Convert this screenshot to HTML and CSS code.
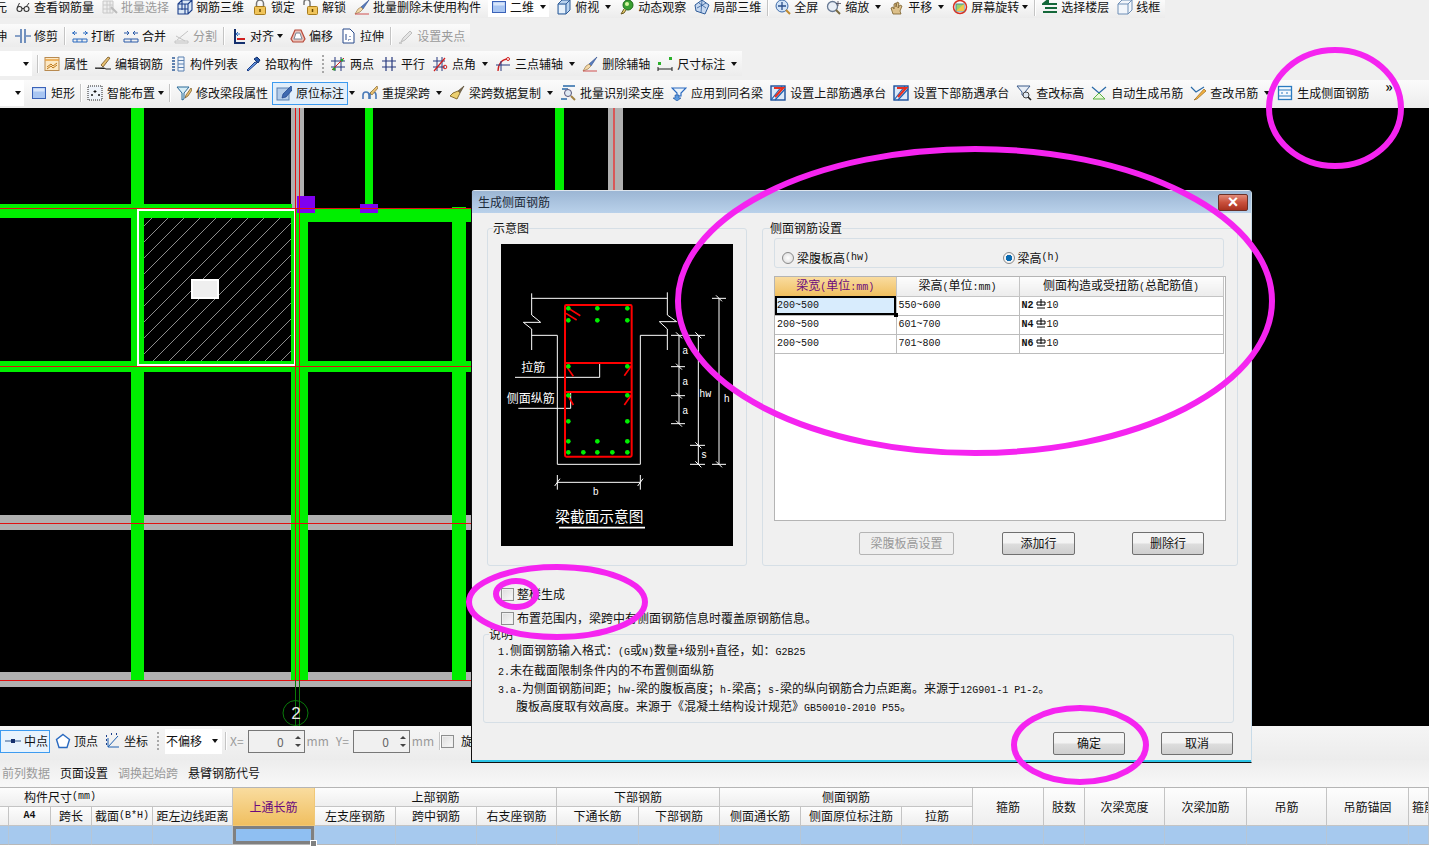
FILE: index.html
```html
<!DOCTYPE html>
<html lang="zh-CN">
<head>
    <meta charset="UTF-8">
    <title>生成侧面钢筋</title>
    <link rel="stylesheet" href="styles.css">
</head>
<body>
    <!-- 工具栏图标 -->
    <svg class="defs" aria-hidden="true">
        <symbol id="i-glasses" viewBox="0 0 16 16"><circle cx="4.500" cy="10" r="2.500" fill="none" stroke="#333" stroke-width="1.100"/><circle cx="11.500" cy="10" r="2.500" fill="none" stroke="#333" stroke-width="1.100"/><path d="M7 9.500h2M2.500 8l2-4M11 8l3-4" stroke="#333" fill="none"/></symbol>
        <symbol id="i-gridgrey" viewBox="0 0 16 16"><path d="M1 2h10v12H1zM1 6h10M1 10h10M5 2v12M8 2v12" fill="#eee" stroke="#c8c8c8"/><path d="M9 8l6 6" stroke="#bbb" stroke-width="2"/></symbol>
        <symbol id="i-box3d" viewBox="0 0 16 16"><path d="M1 5l4-4h10v10l-4 4H1zM1 5h10v10M11 5l4-4M5 1v10M8 5v10M1 10h10" fill="#dbe8f6" stroke="#1c3f8a" stroke-width="1.100"/></symbol>
        <symbol id="i-lock" viewBox="0 0 16 16"><path d="M4.500 8V4.500a3.500 3.500 0 0 1 7 0V8" fill="none" stroke="#777" stroke-width="1.500"/><rect x="2.500" y="7.500" width="11" height="8" rx="1" fill="#f0c45a" stroke="#a87c1c"/><path d="M8 10v3" stroke="#6b4a00" stroke-width="1.500"/></symbol>
        <symbol id="i-unlock" viewBox="0 0 16 16"><path d="M1 6V3.500a3 3 0 0 1 6 0V8" fill="none" stroke="#777" stroke-width="1.500"/><rect x="4.500" y="7.500" width="10" height="8" rx="1" fill="#f0c45a" stroke="#a87c1c"/><path d="M9.500 10v3" stroke="#6b4a00" stroke-width="1.500"/></symbol>
        <symbol id="i-brush" viewBox="0 0 16 16"><path d="M15 1L7 8l2 2z" fill="#5a7fc0" stroke="#2b4a8a" stroke-width=".6"/><path d="M7 8l2 2-3 3-5 2 3-5z" fill="#f3d9a8" stroke="#8b6a3a" stroke-width=".6"/><path d="M1 15h14" stroke="#d05050"/></symbol>
        <symbol id="i-square" viewBox="0 0 16 16"><rect x="1.500" y="2.500" width="13" height="11" fill="#a9c6f2" stroke="#3a62b8"/><rect x="2.500" y="3.500" width="11" height="3" fill="#d9e6fa"/></symbol>
        <symbol id="i-topview" viewBox="0 0 16 16"><path d="M2 5l4-4h8v10l-4 4H2z" fill="#b8d2ee" stroke="#2f5c98"/><path d="M2 5h8v10M10 5l4-4" fill="none" stroke="#2f5c98"/><rect x="3" y="6" width="6" height="8" fill="#e6f0fa"/></symbol>
        <symbol id="i-orbit" viewBox="0 0 16 16"><circle cx="9" cy="6" r="5" fill="#3aa032" stroke="#1e6a1a"/><circle cx="8" cy="5" r="2" fill="#d6f5a0"/><path d="M5 10l-3 5 3-1 2-3" fill="#e8d070" stroke="#6a5a20"/></symbol>
        <symbol id="i-partial" viewBox="0 0 16 16"><path d="M8 1l7 5-4 9-9-3-1-6z" fill="#c6d8f0" stroke="#2f5c98"/><path d="M5 4l7 5M3 9l9-5M8 1l-1 13" stroke="#2f5c98" stroke-width=".8"/></symbol>
        <symbol id="i-fit" viewBox="0 0 16 16"><circle cx="7" cy="7" r="6" fill="#d2e4f8" stroke="#3d6aa8"/><path d="M7 3v8M3 7h8" stroke="#2b4f8a" stroke-width="1.300"/><path d="M11 11l4 4" stroke="#c08a30" stroke-width="2"/></symbol>
        <symbol id="i-zoom" viewBox="0 0 16 16"><circle cx="6.500" cy="7.500" r="5" fill="#e8eef6" stroke="#687a94" stroke-width="1.300"/><path d="M10 11l4 4" stroke="#7a6a40" stroke-width="2"/><path d="M12 2v5M10 4.500h5" stroke="#445" stroke-width=".8"/></symbol>
        <symbol id="i-hand" viewBox="0 0 16 16"><path d="M4 15l-2-6 2-1 1 2V5l2-1v4l1-5 2 1-1 5 2-3 2 1-2 5 1 3z" fill="#dcc08a" stroke="#7a5e2a" stroke-width=".8"/></symbol>
        <symbol id="i-rotate" viewBox="0 0 16 16"><circle cx="8" cy="8" r="6.500" fill="none" stroke="#d83020" stroke-width="1.500"/><rect x="4" y="5" width="8" height="7" fill="#9ed268" stroke="#4a8a9a"/><path d="M4 12l8-7v7z" fill="#f2c84a"/></symbol>
        <symbol id="i-floors" viewBox="0 0 16 16"><path d="M1 5l5-4v4zM1 5h14M3 9h12M1 13h14" stroke="#14683a" stroke-width="2" fill="#1f7fb0"/></symbol>
        <symbol id="i-wire" viewBox="0 0 16 16"><path d="M1 5l4-4h10v10l-4 4H1zM1 5h10v10M11 5l4-4" fill="#f2f6fb" stroke="#6f8fb6"/></symbol>
        <symbol id="i-trim" viewBox="0 0 16 16"><path d="M6 1v14M10 1v14M0 8h5M11 8h5" stroke="#1c4f9a" stroke-width="1.200" fill="none"/></symbol>
        <symbol id="i-break" viewBox="0 0 16 16"><path d="M0 5h5M11 5h5M3 3l-2 2 2 2M13 3l2 2-2 2M1 11h14v3H1z" stroke="#2a6ac0" fill="none"/><path d="M5 11v3M10 11v3" stroke="#2a6ac0"/></symbol>
        <symbol id="i-merge" viewBox="0 0 16 16"><path d="M1 5h5M10 5h5M4 3l2 2-2 2M12 3l-2 2 2 2M1 11h14v3H1z" stroke="#2a5aa8" fill="none"/><path d="M8 11v3" stroke="#2a5aa8"/></symbol>
        <symbol id="i-split" viewBox="0 0 16 16"><path d="M1 13h13v2H1zM3 12L14 3M2 8l9 5" stroke="#c4c4c4" fill="#eee"/></symbol>
        <symbol id="i-align" viewBox="0 0 16 16"><path d="M4 1v14h10" stroke="#14306e" stroke-width="2" fill="none"/><path d="M6 11h8" stroke="#d02020" stroke-width="2"/><path d="M9 6H5l2-2M5 6l2 2" stroke="#2a6ac0" fill="none"/></symbol>
        <symbol id="i-offset" viewBox="0 0 16 16"><path d="M5 2h6l4 9-2 3H3l-2-3z" fill="#e8c0b8" stroke="#b84838" stroke-width="1.200"/><path d="M6 5h4l2 6H4z" fill="#fff" stroke="#7a8a9a"/></symbol>
        <symbol id="i-stretch" viewBox="0 0 16 16"><path d="M2 1h7l4 4v10H2z" fill="#fff" stroke="#27498a"/><path d="M5 6v6M9 8v1M9 11v1M7 12h1" stroke="#27498a"/></symbol>
        <symbol id="i-grip" viewBox="0 0 16 16"><path d="M3 14l2-4 7-7 2 2-7 7z" fill="#e4e4e4" stroke="#bdbdbd"/><path d="M1 15h3" stroke="#ccc" stroke-width="2"/></symbol>
        <symbol id="i-props" viewBox="0 0 16 16"><rect x="1" y="1.500" width="14" height="13" fill="#fce8c4" stroke="#b88a50"/><path d="M1 4h14" stroke="#e8a040" stroke-width="1.500"/><path d="M3 11l4-3 2 2 4-3M3 13l4-3 2 2 4-3" stroke="#c07818" fill="none"/></symbol>
        <symbol id="i-edit" viewBox="0 0 16 16"><path d="M15 2l-2-1-7 8 2 2z" fill="#e8c070" stroke="#705020" stroke-width=".8"/><path d="M0 12h9l2 1h5" stroke="#222"/><path d="M1 12v1" stroke="#222"/></symbol>
        <symbol id="i-list" viewBox="0 0 16 16"><path d="M8 1h6v14H8zM8 4.500h6M8 8h6M8 11.500h6" stroke="#5a80b0" fill="#eef4fb"/><path d="M2 2h3M2 5h3M2 8h3M2 11h3M2 14h3" stroke="#2f5c98" stroke-width="1.500"/></symbol>
        <symbol id="i-pick" viewBox="0 0 16 16"><path d="M10 6L2 14l1 1 9-8z" fill="#6a9ae0" stroke="#1c3f8a"/><path d="M9 3l4 4 2-3-3-3z" fill="#2a5aa8" stroke="#14306e"/></symbol>
        <symbol id="i-twopt" viewBox="0 0 16 16"><path d="M5 1v14M11 1v14M1 5h14M1 11h14" stroke="#27397e"/><path d="M2 14L14 2" stroke="#d02020"/><circle cx="4" cy="13" r="1.500" fill="#2aa02a"/><circle cx="12" cy="4" r="1.500" fill="#2aa02a"/></symbol>
        <symbol id="i-parallel" viewBox="0 0 16 16"><path d="M5 1v14M11 1v14M1 5h14M1 11h14" stroke="#27397e" stroke-width="1.200"/></symbol>
        <symbol id="i-angle" viewBox="0 0 16 16"><path d="M5 1v14M10 1v14M1 5h12M1 11h12" stroke="#27397e"/><path d="M2 15L13 2" stroke="#d02020" stroke-width="1.200"/><circle cx="13" cy="11" r="1.800" fill="none" stroke="#d02020"/></symbol>
        <symbol id="i-arc" viewBox="0 0 16 16"><path d="M3 15C3 8 7 3 13 3" stroke="#d02020" stroke-width="1.300" fill="none"/><path d="M1 9h14M6 5v10" stroke="#27397e"/><circle cx="13" cy="3" r="1.500" fill="#fff" stroke="#d02020"/></symbol>
        <symbol id="i-dim" viewBox="0 0 16 16"><path d="M1 13h14M1 11v4M15 11v4" stroke="#222"/><rect x="1" y="6" width="3" height="3" fill="#2ab02a"/><rect x="12" y="1" width="3" height="3" fill="#2ab02a"/></symbol>
        <symbol id="i-smart" viewBox="0 0 16 16"><rect x="1" y="1" width="14" height="14" fill="#eef3fa" stroke="#222" stroke-dasharray="1 1"/><path d="M8 5v3M6.500 6.500h3M4 10h2M5 9v2M11 10h2M12 9v2" stroke="#111"/></symbol>
        <symbol id="i-funnel" viewBox="0 0 16 16"><path d="M1 2h12L8 8v6l-2 1V8z" fill="#d8eef6" stroke="#2a6a98"/><path d="M15 3l-5 7-1 3 3-2 4-6z" fill="#e8c070" stroke="#705020" stroke-width=".7"/></symbol>
        <symbol id="i-mark" viewBox="0 0 16 16"><rect x="1" y="3" width="12" height="12" fill="#b4cdea" stroke="#5a80b0"/><path d="M15 1l-8 8-1 4 4-1 7-8z" fill="#3f6ab0" stroke="#1c3f8a" stroke-width=".7"/></symbol>
        <symbol id="i-span" viewBox="0 0 16 16"><path d="M1 14v-4a2.500 2.500 0 0 1 6 0v4M8 14v-4a2.500 2.500 0 0 1 6 0v4" fill="none" stroke="#4a7ab8" stroke-width="1.600"/><path d="M15 1l-7 7 2 2 6-7z" fill="#e8c070" stroke="#8a6a30" stroke-width=".7"/></symbol>
        <symbol id="i-sweep" viewBox="0 0 16 16"><path d="M15 1L9 6l2 2z" fill="#7a6a50" stroke="#4a3a20" stroke-width=".6"/><path d="M9 6l2 2-3 6-7-3 3-3z" fill="#ecd070" stroke="#8a7030"/></symbol>
        <symbol id="i-scan" viewBox="0 0 16 16"><path d="M3 1h12M2 4h6M1 14h6" stroke="#2a6aa8" stroke-width="1.500"/><circle cx="8" cy="8" r="3.500" fill="#dfe8f2" stroke="#557"/><path d="M11 11l4 4" stroke="#a08040" stroke-width="2"/></symbol>
        <symbol id="i-apply" viewBox="0 0 16 16"><path d="M1 3h14l-5 5v3H6V8z" fill="#eaf3fb" stroke="#2a6ac0" stroke-width="1.200"/><path d="M4 10h4v3h2l-4 3-4-3h2z" fill="#5a9ae0" stroke="#1c4f9a" stroke-width=".6"/></symbol>
        <symbol id="i-zed" viewBox="0 0 16 16"><rect x="1" y="1" width="14" height="14" fill="#dbe8f8" stroke="#1c4f9a" stroke-width="1.400"/><path d="M1 15L12 1M5 15L15 4" stroke="#1c5fb0" stroke-width="1.200"/><path d="M4 3h9L5 12" fill="none" stroke="#e83020" stroke-width="2.200"/></symbol>
        <symbol id="i-level" viewBox="0 0 16 16"><path d="M1 1h13L9 7v4l-3-1V7z" fill="#e8eef6" stroke="#3a5a8a"/><circle cx="10" cy="10" r="3" fill="#dfe8f2" stroke="#444"/><path d="M12 12l3 3" stroke="#222" stroke-width="1.600"/></symbol>
        <symbol id="i-hang" viewBox="0 0 16 16"><path d="M1 2l7 6 7-6" stroke="#2a6aa8" stroke-width="1.300" fill="none"/><path d="M8 8l6 6H2z" fill="#e8f8d8" stroke="#5ab040"/></symbol>
        <symbol id="i-hangedit" viewBox="0 0 16 16"><path d="M1 2l5 5 8-5" stroke="#2a6aa8" fill="none" stroke-width="1.200"/><path d="M14 4L6 13l-2 2 3-1 9-8z" fill="#f2b040" stroke="#9a6a20" stroke-width=".7"/></symbol>
        <symbol id="i-side" viewBox="0 0 16 16"><rect x="1.500" y="1.500" width="13" height="13" fill="#f4f9fe" stroke="#2a7ac0" stroke-width="1.300"/><path d="M2 5h12M2 11h12" stroke="#2a7ac0"/><path d="M4 8h2M9 8h2" stroke="#2a7ac0"/></symbol>
        <symbol id="i-mid" viewBox="0 0 16 16"><path d="M0 8h16" stroke="#5a7aa8" stroke-width="1.300"/><rect x="6" y="6" width="4" height="4" fill="#14306e"/></symbol>
        <symbol id="i-vertex" viewBox="0 0 16 16"><path d="M8 1.500l6.500 5-2.500 8H4l-2.500-8z" fill="#fff" stroke="#2a6ac0" stroke-width="1.400"/></symbol>
        <symbol id="i-coord" viewBox="0 0 16 16"><path d="M3 5v9h11M3 14L13 3" stroke="#1c5fb0" fill="none"/><path d="M1 3h1M1 7h1M1 11h1M6 1h1M11 1h1" stroke="#1c3f8a" stroke-width="2"/></symbol>
        <symbol id="i-steel" viewBox="0 0 10 10"><path d="M1 3h8v3H1zM5 0v7M1 9h8" fill="none" stroke="#000"/></symbol>
    </svg>

    <!-- 顶部工具栏 -->
    <div class="toolbars">
        <div class="tb-row row-a">
            <span class="cut">元</span>
            <span class="tb"><svg class="ic"><use href="#i-glasses"/></svg>查看钢筋量</span>
            <span class="tb off"><svg class="ic"><use href="#i-gridgrey"/></svg>批量选择</span>
            <span class="tb"><svg class="ic"><use href="#i-box3d"/></svg>钢筋三维</span>
            <span class="tb"><svg class="ic"><use href="#i-lock"/></svg>锁定</span>
            <span class="tb"><svg class="ic"><use href="#i-unlock"/></svg>解锁</span>
            <span class="tb"><svg class="ic"><use href="#i-brush"/></svg>批量删除未使用构件</span>
            <span class="tb tb-white"><svg class="ic"><use href="#i-square"/></svg>二维<i class="arrow"></i></span>
            <span class="tb"><svg class="ic"><use href="#i-topview"/></svg>俯视<i class="arrow"></i></span>
            <span class="tb"><svg class="ic"><use href="#i-orbit"/></svg>动态观察</span>
            <span class="tb"><svg class="ic"><use href="#i-partial"/></svg>局部三维</span>
            <i class="sep"></i>
            <span class="tb"><svg class="ic"><use href="#i-fit"/></svg>全屏</span>
            <span class="tb"><svg class="ic"><use href="#i-zoom"/></svg>缩放<i class="arrow"></i></span>
            <span class="tb"><svg class="ic"><use href="#i-hand"/></svg>平移<i class="arrow"></i></span>
            <span class="tb"><svg class="ic"><use href="#i-rotate"/></svg>屏幕旋转<i class="arrow tight"></i></span>
            <i class="sep"></i>
            <span class="tb"><svg class="ic"><use href="#i-floors"/></svg>选择楼层</span>
            <span class="tb"><svg class="ic"><use href="#i-wire"/></svg>线框</span>
        </div>
        <div class="tb-row row-b">
            <span class="cut">伸</span>
            <span class="tb"><svg class="ic"><use href="#i-trim"/></svg>修剪</span>
            <i class="sep"></i>
            <span class="tb"><svg class="ic"><use href="#i-break"/></svg>打断</span>
            <span class="tb"><svg class="ic"><use href="#i-merge"/></svg>合并</span>
            <span class="tb off"><svg class="ic"><use href="#i-split"/></svg>分割</span>
            <i class="sep"></i>
            <span class="tb"><svg class="ic"><use href="#i-align"/></svg>对齐<i class="arrow tight"></i></span>
            <span class="tb"><svg class="ic"><use href="#i-offset"/></svg>偏移</span>
            <span class="tb"><svg class="ic"><use href="#i-stretch"/></svg>拉伸</span>
            <i class="sep"></i>
            <span class="tb off"><svg class="ic"><use href="#i-grip"/></svg>设置夹点</span>
        </div>
        <div class="tb-row row-c">
            <span class="combo"><i class="arrow"></i></span>
            <i class="sep"></i>
            <span class="tb"><svg class="ic"><use href="#i-props"/></svg>属性</span>
            <span class="tb"><svg class="ic"><use href="#i-edit"/></svg>编辑钢筋</span>
            <span class="tb"><svg class="ic"><use href="#i-list"/></svg>构件列表</span>
            <span class="tb"><svg class="ic"><use href="#i-pick"/></svg>拾取构件</span>
            <i class="grip"></i>
            <span class="tb"><svg class="ic"><use href="#i-twopt"/></svg>两点</span>
            <span class="tb"><svg class="ic"><use href="#i-parallel"/></svg>平行</span>
            <span class="tb"><svg class="ic"><use href="#i-angle"/></svg>点角<i class="arrow"></i></span>
            <span class="tb"><svg class="ic"><use href="#i-arc"/></svg>三点辅轴<i class="arrow"></i></span>
            <span class="tb"><svg class="ic"><use href="#i-brush"/></svg>删除辅轴</span>
            <span class="tb"><svg class="ic"><use href="#i-dim"/></svg>尺寸标注<i class="arrow"></i></span>
        </div>
        <div class="tb-row row-d">
            <span class="combo short"><i class="arrow"></i></span>
            <span class="tb"><svg class="ic"><use href="#i-square"/></svg>矩形</span>
            <i class="sep"></i>
            <span class="tb"><svg class="ic"><use href="#i-smart"/></svg>智能布置<i class="arrow tight"></i></span>
            <i class="sep"></i>
            <span class="tb"><svg class="ic"><use href="#i-funnel"/></svg>修改梁段属性</span>
            <span class="tb tb-on"><svg class="ic"><use href="#i-mark"/></svg>原位标注</span>
            <i class="arrow after-on"></i>
            <span class="tb"><svg class="ic"><use href="#i-span"/></svg>重提梁跨<i class="arrow"></i></span>
            <span class="tb"><svg class="ic"><use href="#i-sweep"/></svg>梁跨数据复制<i class="arrow"></i></span>
            <span class="tb"><svg class="ic"><use href="#i-scan"/></svg>批量识别梁支座</span>
            <span class="tb"><svg class="ic"><use href="#i-apply"/></svg>应用到同名梁</span>
            <span class="tb"><svg class="ic"><use href="#i-zed"/></svg>设置上部筋遇承台</span>
            <span class="tb"><svg class="ic"><use href="#i-zed"/></svg>设置下部筋遇承台</span>
            <span class="tb"><svg class="ic"><use href="#i-level"/></svg>查改标高</span>
            <span class="tb"><svg class="ic"><use href="#i-hang"/></svg>自动生成吊筋</span>
            <span class="tb"><svg class="ic"><use href="#i-hangedit"/></svg>查改吊筋<i class="arrow"></i></span>
            <span class="tb"><svg class="ic"><use href="#i-side"/></svg>生成侧面钢筋</span>
            <span class="more">»</span>
        </div>
    </div>

    <!-- 绘图区 -->
    <svg class="canvas" viewBox="0 108 1429 618">
        <defs>
            <pattern id="hatch" width="16" height="16" patternUnits="userSpaceOnUse" patternTransform="translate(144 218)">
                <path d="M-1 9L9 -1M-1 25L25 -1" stroke="#b0b0b0" stroke-width=".8"/>
            </pattern>
        </defs>
        <rect x="0" y="108" width="1429" height="618" fill="#000"/>
        <rect x="291" y="108" width="13" height="100" fill="#b0b0b0"/>
        <rect x="608" y="108" width="15" height="90" fill="#b0b0b0"/>
        <rect x="613.500" y="108" width="1" height="90" fill="#f00"/>
        <rect x="0" y="515" width="471" height="15" fill="#b0b0b0"/>
        <rect x="0" y="672" width="471" height="15" fill="#b0b0b0"/>
        <g fill="#00ef00">
            <rect x="131" y="108" width="13" height="572"/>
            <rect x="365" y="108" width="8" height="100"/>
            <rect x="555" y="108" width="9" height="90"/>
            <rect x="291" y="208" width="17" height="472"/>
            <rect x="452" y="207" width="14" height="473"/>
            <rect x="0" y="204" width="292" height="14"/>
            <rect x="304" y="208" width="167" height="14"/>
            <rect x="0" y="361" width="471" height="11"/>
        </g>
        <rect x="144" y="218" width="147" height="143" fill="#000"/>
        <rect x="144" y="218" width="147" height="143" fill="url(#hatch)"/>
        <rect x="138" y="210" width="157" height="155" fill="none" stroke="#fff" stroke-width="2"/>
        <rect x="192" y="280" width="26" height="18" fill="#efefef" stroke="#fff" stroke-width="2"/>
        <rect x="297" y="196" width="18" height="17" fill="#7f00f0"/>
        <rect x="360" y="204" width="18" height="9" fill="#7f00f0"/>
        <g fill="#e01010">
            <rect x="0" y="208" width="471" height="1"/>
            <rect x="0" y="366" width="471" height="1"/>
            <rect x="0" y="523" width="471" height="1"/>
            <rect x="0" y="680" width="471" height="1"/>
            <rect x="295" y="108" width="1" height="572"/>
            <rect x="299" y="108" width="1" height="572"/>
        </g>
        <path d="M295.500 680V726M299.500 680V726" stroke="#0a7a0a"/>
        <circle cx="295.500" cy="713" r="12.500" fill="none" stroke="#0a7a0a"/>
        <text x="296" y="719" class="axis-no">2</text>
    </svg>

    <!-- 捕捉工具条 -->
    <div class="snapbar">
        <span class="tb tb-on snap-mid"><svg class="ic"><use href="#i-mid"/></svg>中点</span>
        <span class="tb"><svg class="ic"><use href="#i-vertex"/></svg>顶点</span>
        <span class="tb"><svg class="ic"><use href="#i-coord"/></svg>坐标</span>
        <i class="grip"></i>
        <span class="combo wide">不偏移<i class="arrow"></i></span>
        <i class="sep"></i>
        <span class="off">X=</span>
        <span class="spin">0<i class="spin-btn"></i></span>
        <span class="off">mm</span>
        <span class="off">Y=</span>
        <span class="spin">0<i class="spin-btn"></i></span>
        <span class="off">mm</span>
        <i class="sep"></i>
        <i class="check"></i>
        <span>旋</span>
    </div>
    <div class="actionbar">
        <span class="off first-cut">前列数据</span>
        <span>页面设置</span>
        <span class="off">调换起始跨</span>
        <span>悬臂钢筋代号</span>
    </div>

    <!-- 原位标注表格 -->
    <div class="beam-grid">
        <div class="th span-5 left-pad">构件尺寸<span class="lat">(mm)</span></div>
        <div class="th hot row-2">上通长筋</div>
        <div class="th span-3">上部钢筋</div>
        <div class="th span-2">下部钢筋</div>
        <div class="th span-3">侧面钢筋</div>
        <div class="th row-2">箍筋</div>
        <div class="th row-2">肢数</div>
        <div class="th row-2">次梁宽度</div>
        <div class="th row-2">次梁加筋</div>
        <div class="th row-2">吊筋</div>
        <div class="th row-2">吊筋锚固</div>
        <div class="th row-2 clip">箍筋</div>

        <div class="th"></div>
        <div class="th lat strong">A4</div>
        <div class="th">跨长</div>
        <div class="th">截面<span class="lat">(B*H)</span></div>
        <div class="th">距左边线距离</div>
        <div class="th">左支座钢筋</div>
        <div class="th">跨中钢筋</div>
        <div class="th">右支座钢筋</div>
        <div class="th">下通长筋</div>
        <div class="th">下部钢筋</div>
        <div class="th">侧面通长筋</div>
        <div class="th">侧面原位标注筋</div>
        <div class="th">拉筋</div>

        <div class="td"></div><div class="td"></div><div class="td"></div><div class="td"></div><div class="td"></div>
        <div class="td current"></div>
        <div class="td"></div><div class="td"></div><div class="td"></div><div class="td"></div><div class="td"></div>
        <div class="td"></div><div class="td"></div><div class="td"></div>
        <div class="td"></div><div class="td"></div><div class="td"></div><div class="td"></div><div class="td"></div>
        <div class="td"></div><div class="td"></div>
    </div>
    <div class="grid-rest"></div>

    <!-- 生成侧面钢筋 对话框 -->
    <div class="dialog">
        <div class="dlg-title">
            <span>生成侧面钢筋</span>
            <span class="dlg-close">×</span>
        </div>
        <div class="dlg-body">
            <div class="dlg-top">
                <fieldset class="group group-pic">
                    <legend>示意图</legend>
                    <svg class="section" viewBox="93 177 696 906">
                        <rect x="93" y="177" width="696" height="906" fill="#000"/>
                        <g fill="none" stroke="#fff" stroke-width="3">
                            <path d="M185 340H592M185 325V390L212 412H160L185 432V495M592 322V390L620 410H568L592 432V495"/>
                            <path d="M185 451H262V838H511V451H592"/>
                            <path d="M603 451H705M627 451V716M603 545H645M603 632H645M603 716H645"/>
                            <path d="M685 451V838M660 781H705M660 838H705M747 340V838M726 340H768M726 838H768"/>
                            <path d="M135 577H389V534M145 670H302V622"/>
                            <path d="M262 892H511M262 870V914M511 870V914M254 903L270 881M503 903L519 881"/>
                            <path d="M618 442L636 460M618 536L636 554M618 623L636 641M618 707L636 725M676 442L694 460M676 772L694 790M676 829L694 847M738 331L756 349M738 829L756 847"/>
                        </g>
                        <g fill="none" stroke="#f00" stroke-width="6">
                            <rect x="285" y="360" width="200" height="455" rx="4"/>
                            <path d="M285 534H485M285 621H485"/>
                        </g>
                        <g fill="none" stroke="#f00" stroke-width="5">
                            <path d="M295 370L331 392M288 385L320 405M288 542L310 574M484 542L463 572M293 630L310 660M484 630L463 660"/>
                        </g>
                        <g class="bars">
                            <circle cx="295" cy="370" r="7"/><circle cx="382" cy="370" r="7"/><circle cx="472" cy="370" r="7"/>
                            <circle cx="295" cy="406" r="7"/><circle cx="382" cy="406" r="7"/><circle cx="472" cy="406" r="7"/>
                            <circle cx="295" cy="544" r="7"/><circle cx="472" cy="544" r="7"/>
                            <circle cx="295" cy="631" r="7"/><circle cx="472" cy="631" r="7"/>
                            <circle cx="295" cy="709" r="7"/><circle cx="472" cy="709" r="7"/>
                            <circle cx="295" cy="769" r="7"/><circle cx="382" cy="769" r="7"/><circle cx="472" cy="769" r="7"/>
                            <circle cx="295" cy="802" r="7"/><circle cx="340" cy="802" r="7"/><circle cx="382" cy="802" r="7"/><circle cx="427" cy="802" r="7"/><circle cx="472" cy="802" r="7"/>
                        </g>
                        <g class="pic-label">
                            <text x="190" y="560">拉筋</text>
                            <text x="182" y="653">侧面纵筋</text>
                            <text x="646" y="507" class="pic-lat">a</text>
                            <text x="646" y="600" class="pic-lat">a</text>
                            <text x="646" y="688" class="pic-lat">a</text>
                            <text x="706" y="635" class="pic-lat">hw</text>
                            <text x="702" y="820" class="pic-lat">s</text>
                            <text x="770" y="650" class="pic-lat">h</text>
                            <text x="377" y="931" class="pic-lat">b</text>
                            <text x="388" y="1010" class="pic-title">梁截面示意图</text>
                        </g>
                        <path d="M267 1028H525" stroke="#fff" stroke-width="5"/>
                    </svg>
                </fieldset>
                <fieldset class="group group-set">
                    <legend>侧面钢筋设置</legend>
                    <div class="radio-box">
                        <label class="radio-item"><i class="radio"></i>梁腹板高<span class="lat">(hw)</span></label>
                        <label class="radio-item"><i class="radio on"></i>梁高<span class="lat">(h)</span></label>
                    </div>
                    <div class="rule-box">
                        <table class="rule-table">
                            <colgroup><col class="c1"><col class="c2"><col class="c3"></colgroup>
                            <tr>
                                <th class="hot">梁宽<span class="lat">(</span>单位<span class="lat">:mm)</span></th>
                                <th>梁高<span class="lat">(</span>单位<span class="lat">:mm)</span></th>
                                <th>侧面构造或受扭筋<span class="lat">(</span>总配筋值<span class="lat">)</span></th>
                            </tr>
                            <tr>
                                <td class="lat active-cell">200~500</td>
                                <td class="lat">550~600</td>
                                <td class="lat"><b>N2</b><svg class="steel"><use href="#i-steel"/></svg>10</td>
                            </tr>
                            <tr>
                                <td class="lat">200~500</td>
                                <td class="lat">601~700</td>
                                <td class="lat"><b>N4</b><svg class="steel"><use href="#i-steel"/></svg>10</td>
                            </tr>
                            <tr>
                                <td class="lat">200~500</td>
                                <td class="lat">701~800</td>
                                <td class="lat"><b>N6</b><svg class="steel"><use href="#i-steel"/></svg>10</td>
                            </tr>
                        </table>
                    </div>
                    <div class="set-actions">
                        <button class="btn b-web" disabled>梁腹板高设置</button>
                        <button class="btn b-add">添加行</button>
                        <button class="btn b-del">删除行</button>
                    </div>
                </fieldset>
            </div>
            <label class="check-row"><i class="check"></i>整楼生成</label>
            <label class="check-row"><i class="check"></i>布置范围内，梁跨中有侧面钢筋信息时覆盖原钢筋信息。</label>
            <fieldset class="group group-note">
                <legend>说明</legend>
                <p class="note"><span class="lat">1.</span>侧面钢筋输入格式：<span class="lat">(G</span>或<span class="lat">N)</span>数量+级别+直径，如：<span class="lat">G2B25</span></p>
                <p class="note"><span class="lat">2.</span>未在截面限制条件内的不布置侧面纵筋</p>
                <p class="note"><span class="lat">3.a-</span>为侧面钢筋间距；<span class="lat">hw-</span>梁的腹板高度；<span class="lat">h-</span>梁高；<span class="lat">s-</span>梁的纵向钢筋合力点距离。来源于<span class="lat">12G901-1 P1-2</span>。</p>
                <p class="note indent">腹板高度取有效高度。来源于《混凝土结构设计规范》<span class="lat">GB50010-2010 P55</span>。</p>
            </fieldset>
            <div class="dlg-actions">
                <button class="btn">确定</button>
                <button class="btn">取消</button>
            </div>
        </div>
    </div>

    <!-- 截图上的洋红色圈注 -->
    <svg class="marks" viewBox="0 0 1429 859">
        <ellipse cx="1335" cy="108" rx="66" ry="58"/>
        <ellipse cx="975" cy="301" rx="297" ry="152"/>
        <ellipse cx="557" cy="602" rx="88" ry="35"/>
        <ellipse cx="516" cy="594" rx="20" ry="13"/>
        <ellipse cx="1080" cy="745" rx="66" ry="37"/>
    </svg>
</body>
</html>
```

FILE: styles.css
```css
* {
    box-sizing: border-box;
}

body {
    margin: 0;
    width: 1429px;
    height: 859px;
    overflow: hidden;
    position: relative;
    display: flex;
    flex-direction: column;
    background: #efefef;
    color: #111;
    font-family: "Noto Sans CJK SC", "Liberation Sans", sans-serif;
    font-size: 12px;
    line-height: 14px;
}

.defs {
    position: absolute;
    width: 0;
    height: 0;
}

.lat {
    font-family: "Liberation Mono", "Noto Sans CJK SC", monospace;
    font-size: 10px;
}

.strong {
    font-weight: bold;
}

.off {
    color: #9a9a9a;
}

/* 工具栏 */
.toolbars {
    height: 108px;
    flex: none;
}

.tb-row {
    display: flex;
    align-items: center;
    gap: 8px;
    white-space: nowrap;
    background: linear-gradient(#fbfbfb, #ececec);
}

.row-a {
    width: 1165px;
    height: 18px;
    padding-bottom: 4px;
    overflow: hidden;
}

.row-b {
    width: 470px;
    height: 23px;
    margin-top: 6px;
}

.row-c {
    width: 742px;
    height: 25px;
    margin-top: 4px;
    gap: 7px;
}

.row-d {
    height: 28px;
    margin-top: 4px;
    gap: 7px;
    padding-bottom: 2px;
}

.cut {
    margin-left: -5px;
}

.tb {
    display: flex;
    align-items: center;
    flex: none;
}

.ic {
    width: 16px;
    height: 16px;
    margin-right: 3px;
    flex: none;
}

.row-c .ic,
.row-d .ic {
    margin-right: 4px;
}

.tb-white {
    background: #fff;
    padding: 0 3px;
    margin: -3px -1px -3px -1px;
    height: 20px;
}

.tb-on {
    height: 23px;
    padding: 0 3px;
    margin: 0 -1px 0 -3px;
    background: #e2effb;
    border: 1px solid #3d9bf0;
}

.arrow {
    display: inline-block;
    width: 0;
    height: 0;
    margin-left: 6px;
    border: 3px solid transparent;
    border-top: 4px solid #111;
    border-bottom: 0;
    flex: none;
}

.arrow.tight {
    margin-left: 3px;
}

.arrow.after-on {
    margin-left: -5px;
}

.row-b .arrow.tight {
    margin-right: -1px;
}

.sep {
    width: 2px;
    height: 18px;
    margin: 0 -2px;
    border-left: 1px solid #c4c4c4;
    border-right: 1px solid #fff;
    flex: none;
}

.grip {
    width: 2px;
    height: 18px;
    margin: 0 2px;
    border-left: 2px dotted #a8a8a8;
    flex: none;
}

.row-c .grip {
    margin: 0 -1px 0 2px;
}

.combo {
    width: 32px;
    height: 100%;
    display: flex;
    align-items: center;
    justify-content: flex-end;
    padding-right: 3px;
    background: #fff;
    flex: none;
}

.combo.short {
    width: 24px;
}

.more {
    margin-left: 9px;
    align-self: flex-start;
    font-size: 14px;
    font-weight: bold;
    line-height: 12px;
}

/* 绘图区 */
.canvas {
    display: block;
    width: 1429px;
    height: 618px;
    flex: none;
}

.axis-no {
    fill: #e8e8e8;
    font-family: "Liberation Sans", sans-serif;
    font-size: 17px;
    text-anchor: middle;
}

/* 捕捉工具条 */
.snapbar {
    height: 34px;
    flex: none;
    display: flex;
    align-items: center;
    gap: 7px;
    padding-bottom: 4px;
    background: linear-gradient(#f5f5f5, #ececec);
    white-space: nowrap;
}

.snap-mid {
    margin: 0 -2px 0 0;
    width: 50px;
    padding-left: 5px;
    background: #e8f3fd;
}

.snap-mid .ic {
    margin-left: -1px;
}

.combo.wide {
    width: 57px;
    height: 25px;
    justify-content: space-between;
    padding: 0 4px 0 1px;
    margin-left: -3px;
    margin-right: -2px;
}

.snapbar .arrow {
    margin-left: 0;
}

.snapbar .sep {
    margin: 0 -4px 0 -2px;
}

.snapbar .check {
    margin-left: -3px;
}

.spin {
    width: 57px;
    height: 23px;
    padding-right: 20px;
    margin: 0 -5px 0 -3px;
    border: 1px solid #777;
    background: #f0f0f0;
    color: #666;
    text-align: right;
    line-height: 21px;
    position: relative;
}

.spin-btn {
    position: absolute;
    right: 3px;
    top: 5px;
    width: 0;
    height: 0;
    border: 3px solid transparent;
    border-bottom: 3px solid #444;
    border-top: 0;
}

.spin-btn::after {
    content: "";
    position: absolute;
    left: -3px;
    top: 8px;
    border: 3px solid transparent;
    border-top: 3px solid #444;
    border-bottom: 0;
}

.check {
    display: inline-block;
    width: 13px;
    height: 13px;
    flex: none;
    border: 1px solid #8e8f8f;
    background: linear-gradient(135deg, #dcdcdc, #fafafa);
    box-shadow: inset 0 0 0 1px #efefef;
}

.actionbar {
    height: 27px;
    flex: none;
    display: flex;
    align-items: center;
    gap: 10px;
    padding-bottom: 2px;
    background: linear-gradient(#ededed, #f8f8f8);
    white-space: nowrap;
}

.first-cut {
    margin-left: 2px;
}

/* 底部表格 */
.beam-grid {
    display: grid;
    grid-template-columns: 9px 42px 41px 61px 80px 82px 81px 81px 80px 82px 81px 81px 101px 71px 71px 41px 80px 82px 80px 82px 20px;
    grid-template-rows: 19px 19px 19px;
    border-top: 1px solid #b5b5b5;
    background: #fff;
    flex: none;
}

.grid-rest {
    flex: 1;
    background: #fff;
}

.th,
.td {
    display: flex;
    align-items: center;
    justify-content: center;
    overflow: hidden;
    white-space: nowrap;
    border-right: 1px solid #c4c4c4;
    border-bottom: 1px solid #c4c4c4;
}

.th {
    background: linear-gradient(#fdfdfd, #eeeeee);
}

.th.hot {
    background: linear-gradient(#f9dc9f, #f0bf60);
    color: #6b0a7e;
    border-color: #f0c878;
}

.td {
    background: #a6c9ee;
    border-right-color: #b6c6d6;
    border-bottom-color: #b8b8b8;
}

.td.current {
    position: relative;
    background: #8fbff2;
    overflow: visible;
    box-shadow: inset 0 0 0 3px #808080;
}

.td.current::after {
    content: "";
    position: absolute;
    right: -3px;
    bottom: -3px;
    width: 5px;
    height: 5px;
    background: #808080;
    border: 1px solid #fff;
}

.span-5 { grid-column: span 5; }
.span-3 { grid-column: span 3; }
.span-2 { grid-column: span 2; }
.row-2 { grid-row: span 2; }

.left-pad {
    justify-content: flex-start;
    padding-left: 24px;
}

.clip {
    justify-content: flex-start;
    padding-left: 3px;
}

/* 对话框 */
.dialog {
    position: absolute;
    left: 471px;
    top: 190px;
    width: 781px;
    height: 573px;
    display: flex;
    flex-direction: column;
    background: #f0f0f0;
    border: 1px solid #111;
    border-top-color: #dfe6ee;
    border-right-color: #c8dbe8;
    border-radius: 4px 4px 0 0;
    box-shadow: inset 0 -2px #2cc4e6;
}

.dlg-title {
    height: 22px;
    flex: none;
    display: flex;
    align-items: center;
    justify-content: space-between;
    padding: 0 3px 0 6px;
    background: linear-gradient(#9cb6d4, #b9d1ea);
    color: #1c2a3a;
}

.dlg-close {
    width: 30px;
    height: 17px;
    border: 1px solid #6a3028;
    border-radius: 2px;
    background: linear-gradient(#e08a78 0%, #c9503c 50%, #a8321f 100%);
    color: #fff;
    font-family: "Liberation Sans", sans-serif;
    font-size: 18px;
    font-weight: bold;
    line-height: 14px;
    text-align: center;
}

.dlg-body {
    padding: 8px 13px 0 15px;
}

.dlg-top {
    display: flex;
    gap: 15px;
}

.group {
    margin: 0;
    padding: 0;
    min-width: 0;
    border: 1px solid #d6dfe6;
    border-radius: 3px;
}

.group legend {
    margin-left: 5px;
    padding: 0;
    height: 14px;
    line-height: 14px;
}

.group-pic {
    width: 260px;
    height: 345px;
    padding: 9px 0 0 13px;
}

.group-pic legend {
    margin-left: -8px;
}

.section {
    display: block;
    width: 232px;
    height: 302px;
}

.bars circle {
    fill: #00ef00;
}

.pic-label text {
    fill: #fff;
    font-size: 36px;
    text-anchor: middle;
}

.pic-label .pic-lat {
    font-family: "Liberation Mono", monospace;
    font-size: 30px;
}

.pic-label .pic-title {
    font-size: 44px;
}

.group-set {
    width: 476px;
    height: 345px;
    padding: 3px 0 0 11px;
}

.group-set legend {
    margin-left: -4px;
}

.radio-box {
    width: 450px;
    height: 30px;
    display: flex;
    align-items: center;
    padding: 9px 0 0 7px;
    border: 1px solid #d6dfe6;
    border-radius: 3px;
}

.radio-item {
    display: flex;
    align-items: center;
    width: 221px;
}

.radio {
    width: 12px;
    height: 12px;
    margin-right: 3px;
    border: 1px solid #8a8a8a;
    border-radius: 50%;
    background: radial-gradient(#fff, #d8d8d8);
}

.radio.on {
    background: radial-gradient(#0a6ab0 0 3px, #f4f4f4 3.500px);
}

.rule-box {
    width: 452px;
    height: 245px;
    margin-top: 8px;
    border: 1px solid #b4b4b4;
    background: #fff;
}

.rule-table {
    border-collapse: collapse;
    table-layout: fixed;
    width: 448px;
}

.c1 { width: 121px; }
.c2 { width: 123px; }
.c3 { width: 204px; }

.rule-table tr {
    height: 19px;
}

.rule-table th {
    padding: 0;
    font-weight: normal;
    background: linear-gradient(#fdfdfd, #ececec);
    border: 1px solid #c4c4c4;
    border-top: 0;
    border-left: 0;
}

.rule-table th.hot {
    background: linear-gradient(#f9dc9f, #f0bf60);
    color: #6b0a7e;
}

.rule-table td {
    padding: 0 0 0 2px;
    border: 1px solid #bcbcbc;
    border-top: 0;
    border-left: 0;
    white-space: nowrap;
}

.rule-table td b {
    font-weight: bold;
}

.steel {
    width: 10px;
    height: 10px;
    margin: 0 1px 0 2px;
    vertical-align: -1px;
}

.rule-table td.active-cell {
    position: relative;
    background: #d8ecfd;
    outline: 2px solid #000;
    outline-offset: -2px;
}

.active-cell::after {
    content: "";
    position: absolute;
    right: -2px;
    bottom: -2px;
    width: 4px;
    height: 4px;
    background: #000;
}

.set-actions {
    display: flex;
    margin-top: 11px;
}

.btn {
    width: 73px;
    height: 23px;
    padding: 0 0 2px;
    border: 1px solid #707070;
    border-radius: 2px;
    background: linear-gradient(#f4f4f4 45%, #dcdcdc 55%, #cfcfcf);
    color: #111;
    font: inherit;
}

.btn:disabled {
    border-color: #b4b4b4;
    background: #efefef;
    color: #9a9a9a;
}

.b-web {
    width: 95px;
    margin-left: 85px;
}

.b-add {
    margin-left: 48px;
}

.b-del {
    width: 72px;
    margin-left: 57px;
}

.check-row {
    display: flex;
    align-items: center;
    gap: 3px;
    height: 24px;
    padding-left: 14px;
}

.dlg-top + .check-row {
    margin-top: 16px;
}

.group-note {
    width: 751px;
    height: 96px;
    margin: -3px 0 0 -4px;
}

.note {
    margin: 0 0 0 14px;
    height: 18px;
    line-height: 18px;
    white-space: nowrap;
}

.note:first-of-type {
    margin-bottom: 2px;
}

.note.indent {
    margin-left: 32px;
}

.dlg-actions {
    display: flex;
    justify-content: flex-end;
    gap: 36px;
    margin-top: 9px;
    margin-right: 5px;
}

.dlg-actions .btn {
    width: 72px;
}

/* 圈注 */
.marks {
    position: absolute;
    left: 0;
    top: 0;
    width: 1429px;
    height: 859px;
    pointer-events: none;
}

.marks ellipse {
    fill: none;
    stroke: #f524f0;
    stroke-width: 6;
}
```
